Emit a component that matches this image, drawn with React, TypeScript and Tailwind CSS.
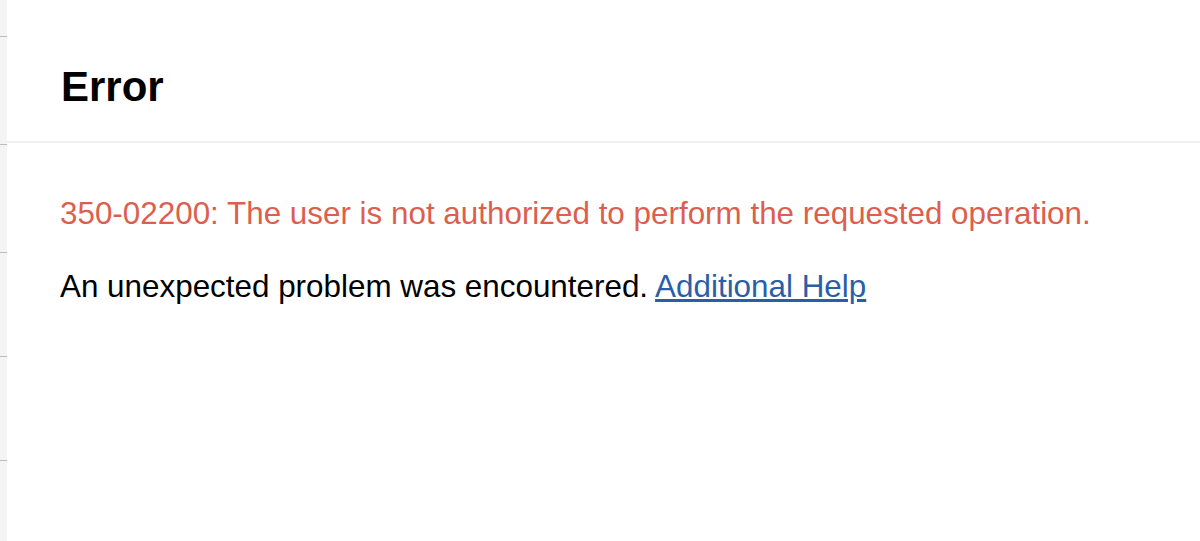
import React from "react";

export default function App() {
  const rows = [37, 108, 108, 104, 104];
  return (
    <div className="flex h-[541px] w-[1200px] bg-white" style={{ fontFamily: '"Liberation Sans", Arial, sans-serif' }}>
      <div className="flex w-[7px] shrink-0 flex-col bg-[#f4f4f4]">
        {rows.map((h, i) => (
          <div key={i} className="border-b border-[#bdbdbd]" style={{ height: h }} />
        ))}
      </div>
      <div className="flex flex-1 flex-col">
        <div className="h-[143px] border-b-2 border-[#f0f0f0] pl-[54px] pt-[66px]">
          <h1 className="text-[42px] font-bold leading-[42px] text-black">Error</h1>
        </div>
        <div className="pl-[53px] pt-[55px]">
          <p className="text-[31.4px] leading-[31px] text-[#dc5f4e]">
            350-02200: The user is not authorized to perform the requested operation.
          </p>
          <p className="mt-[42px] text-[31.4px] leading-[31px] text-black">
            An unexpected problem was encountered.{" "}
            <a href="#" className="text-[#2b5ea8] underline">Additional Help</a>
          </p>
        </div>
      </div>
    </div>
  );
}
